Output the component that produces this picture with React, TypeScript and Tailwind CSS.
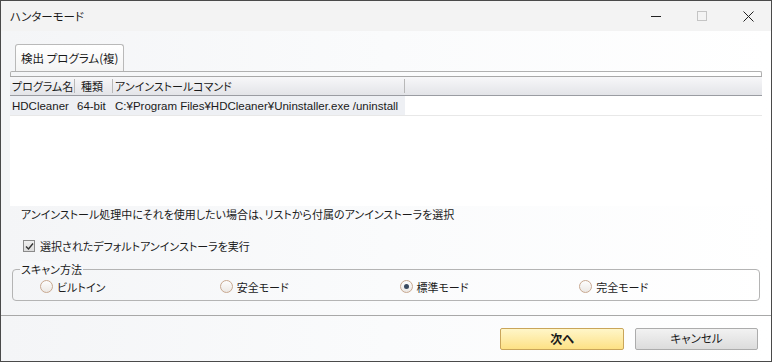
import React from 'react';

const font = "font-['Noto_Sans_CJK_JP',sans-serif] [font-feature-settings:'palt']";

const Radio = ({ label, checked }: { label: string; checked?: boolean }) => (
  <div className="flex items-center gap-[4px] w-[180px]">
    <span className="w-[13px] h-[13px] rounded-full border border-[#c8a890] bg-gradient-to-b from-[#fdfdfd] to-[#ece8e4] flex items-center justify-center">
      {checked && <span className="w-[5px] h-[5px] rounded-full bg-[#3a4a60]" />}
    </span>
    <span>{label}</span>
  </div>
);

export default function App() {
  return (
    <div className={`w-[772px] h-[362px] border border-[#4a4a4a] flex flex-col text-[11px] leading-[16px] text-[#1a1a1a] ${font}`}>
      {/* Title bar */}
      <div className="h-[30px] bg-[#f3f3f3] flex items-center pl-[9px] shrink-0">
        <span className="flex-1 text-[11.5px]">ハンターモード</span>
        <div className="flex items-center h-full">
          <div className="w-[46px] h-full flex items-center justify-center">
            <div className="w-[10px] h-px bg-[#222]" />
          </div>
          <div className="w-[46px] h-full flex items-center justify-center">
            <div className="w-[10px] h-[10px] border border-[#c4c4c4]" />
          </div>
          <div className="w-[46px] h-full flex items-center justify-center">
            <svg width="11" height="11" viewBox="0 0 11 11">
              <path d="M0.5 0.5 L10.5 10.5 M10.5 0.5 L0.5 10.5" stroke="#222" strokeWidth="1" />
            </svg>
          </div>
        </div>
      </div>

      {/* Client area */}
      <div className="flex-1 flex flex-col bg-gradient-to-r from-[#f4f5f7] via-[#fafbfc] to-white">
        <div className="px-[9px] pt-[13px]">
          {/* Tab */}
          <div className="flex pl-[5px]">
            <div className="h-[27px] px-[5px] flex items-center border border-b-0 border-[#b9b9b9] rounded-t-[3px] bg-gradient-to-b from-white to-[#f4f4f4] text-[11.5px]">
              検出 プログラム(複)
            </div>
          </div>
          {/* Tab panel */}
          <div className="border-t border-x border-[#b0b0b0] rounded-t-[2px] h-[5px]" />
          {/* List */}
          <div className="bg-white h-[130px] flex flex-col">
            <div className="h-[20px] flex items-center border-t border-b border-t-[#a8a8a8] border-b-[#9a9ca2] bg-gradient-to-b from-[#f7f7f9] to-[#e3e4e8] whitespace-nowrap">
              <div className="w-[65px] pl-[2px] border-r border-[#b8b8b8] h-[14px] flex items-center">プログラム名</div>
              <div className="w-[38px] pl-[6px] border-r border-[#b8b8b8] h-[14px] flex items-center">種類</div>
              <div className="w-[292px] pl-[2px] border-r border-[#b8b8b8] h-[14px] flex items-center">アンインストールコマンド</div>
            </div>
            <div className="h-[20px] flex items-center border-b border-[#e8e8e8]">
              <div className="w-[395px] h-full bg-[#eef0f4] flex items-center pl-[2px] font-['Liberation_Sans','Noto_Sans_CJK_JP',sans-serif] text-[11.5px] whitespace-nowrap">
                <span className="w-[65px]">HDCleaner</span>
                <span className="w-[38px]">64-bit</span>
                <span>C:¥Program Files¥HDCleaner¥Uninstaller.exe /uninstall</span>
              </div>
            </div>
          </div>
        </div>

        <div className="pl-[20px] h-[16px] whitespace-nowrap">アンインストール処理中にそれを使用したい場合は、リストから付属のアンインストーラを選択</div>

        <div className="pl-[22px] mt-[16px] h-[16px] flex items-center gap-[5px]">
          <span className="w-[12px] h-[12px] border border-[#8a8a8a] bg-gradient-to-b from-[#f0f0f0] to-[#dcdcdc] flex items-center justify-center">
            <svg width="9" height="9" viewBox="0 0 9 9">
              <path d="M1 4.5 L3.5 7 L8 1.5" stroke="#333" strokeWidth="1.4" fill="none" />
            </svg>
          </span>
          <span>選択されたデフォルトアンインストーラを実行</span>
        </div>

        {/* Group box */}
        <div className="mx-[11px] mt-[15px] relative border border-[#b4b4b4] rounded-[4px] h-[32px] flex items-center pl-[27px] pt-[3px]">
          <span className="absolute left-[7px] -top-[9px] px-[1px] bg-[#f6f7f9] leading-[16px]">スキャン方法</span>
          <Radio label="ビルトイン" />
          <Radio label="安全モード" />
          <Radio label="標準モード" checked />
          <Radio label="完全モード" />
        </div>

        <div className="mt-[14px] border-t border-[#a8a8a8]" />

        <div className="flex justify-end gap-[11px] pr-[13px] pt-[12px]">
          <button className="w-[124px] h-[22px] rounded-[2px] border border-[#c9a55a] bg-gradient-to-b from-[#fff6c8] to-[#fde184] font-bold text-[12px] leading-none">
            次へ
          </button>
          <button className="w-[123px] h-[22px] rounded-[2px] border border-[#acacac] bg-gradient-to-b from-[#f2f2f2] to-[#dcdcdc] text-[11.5px] leading-none">
            キャンセル
          </button>
        </div>
      </div>
    </div>
  );
}
